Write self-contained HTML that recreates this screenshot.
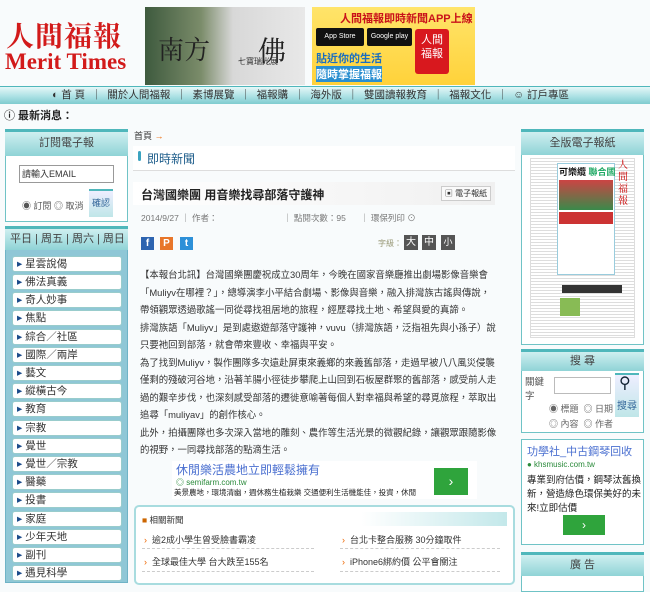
<!DOCTYPE html>
<html><head><meta charset="utf-8"><style>
*{margin:0;padding:0;box-sizing:border-box}
body{width:650px;height:583px;overflow:hidden;background:#f8fbfc;font-family:"Liberation Sans","Noto Sans CJK TC",sans-serif;font-size:11px;color:#333;position:relative}
.a{position:absolute}
.th{background:linear-gradient(#cfeff0,#8fd3d6);border-top:3px solid #4fb7bb;text-align:center;color:#444;font-size:11px}
.box{border:1px solid #6fc3c6;background:#fff}
.li{position:absolute;left:12px;width:110px;height:16px;background:#fff;border:1px solid #9cc;border-radius:3px;font-size:10.5px;line-height:14px;padding-left:4px;color:#333}
.li:before{content:"▸ ";color:#1a4a8a}
.p{font-size:9.4px;line-height:17.5px;color:#333;white-space:nowrap}
</style></head><body>
<!-- header -->
<div class="a" style="left:6px;top:15px;color:#d21a1a;font-family:'Noto Serif CJK SC',serif;font-weight:bold;font-size:28px;letter-spacing:1px">人間福報</div>
<div class="a" style="left:5px;top:49px;color:#d21a1a;font-family:'Liberation Serif',serif;font-weight:bold;font-size:23px">Merit Times</div>
<div class="a" style="left:145px;top:7px;width:160px;height:78px;background:linear-gradient(90deg,#3e5a3e,#7b8c6a 35%,#d8d8d8 55%,#e8e8e8)"></div>
<div class="a" style="left:158px;top:30px;font-size:26px;color:#222;font-family:'Noto Serif CJK SC',serif">南方</div>
<div class="a" style="left:258px;top:30px;font-size:28px;color:#222;font-family:'Noto Serif CJK SC',serif">佛</div>
<div class="a" style="left:238px;top:56px;font-size:8px;color:#333">七寶瑞光展</div>
<div class="a" style="left:312px;top:7px;width:163px;height:78px;background:linear-gradient(#ffe46a,#ffd23a)"></div>
<div class="a" style="left:340px;top:10px;font-size:11px;font-weight:bold;color:#c9121a">人間福報即時新聞APP上線</div>
<div class="a" style="left:316px;top:28px;width:48px;height:18px;background:#111;border-radius:2px;color:#fff;font-size:7px;text-align:center;line-height:18px">App Store</div>
<div class="a" style="left:367px;top:28px;width:45px;height:18px;background:#111;border-radius:2px;color:#fff;font-size:7px;text-align:center;line-height:18px">Google play</div>
<div class="a" style="left:415px;top:29px;width:34px;height:45px;background:#d8181e;border-radius:3px;color:#fff;font-size:11px;text-align:center;line-height:14px;padding-top:4px">人間<br>福報</div>
<div class="a" style="left:316px;top:50px;font-size:11px;font-weight:bold;color:#1a6ec0">貼近你的生活</div>
<div class="a" style="left:316px;top:66px;font-size:11px;font-weight:bold;color:#fff;background:#2a8fd0">隨時掌握福報</div>
<!-- nav -->
<div class="a" style="left:0;top:86px;width:650px;height:18px;background:linear-gradient(#e5f7f8,#a7dfe2 60%,#7fcbcf);border-top:1px solid #4fb7bb;font-size:10.5px;line-height:17px;color:#333;padding-left:52px;white-space:nowrap">◐ 首 頁 &nbsp;｜&nbsp; 關於人間福報 &nbsp;｜&nbsp; 素博展覽 &nbsp;｜&nbsp; 福報購 &nbsp;｜&nbsp; 海外版 &nbsp;｜&nbsp; 雙國讀報教育 &nbsp;｜&nbsp; 福報文化 &nbsp;｜&nbsp; ☺ 訂戶專區</div>
<div class="a" style="left:4px;top:107px;font-size:11px;font-weight:bold;color:#222">ⓘ 最新消息：</div>
<!-- left -->
<div class="a box" style="left:5px;top:129px;width:123px;height:93px"></div>
<div class="a th" style="left:5px;top:129px;width:123px;height:27px;line-height:22px">訂閱電子報</div>
<div class="a" style="left:19px;top:165px;width:95px;height:18px;border:1px solid #999;background:#fff;font-size:9px;line-height:16px;padding-left:2px">請輸入EMAIL</div>
<div class="a" style="left:22px;top:199px;font-size:9px;color:#555;white-space:nowrap">◉ 訂閱 ◎ 取消</div>
<div class="a" style="left:89px;top:189px;width:24px;height:28px;background:linear-gradient(#eef,#bfe6e8);border-top:2px solid #4fb7bb;font-size:9px;color:#369;text-align:center;line-height:24px">確認</div>
<div class="a" style="left:5px;top:226px;width:123px;height:357px;background:#8fc7d6;border:1px solid #6fb3c6"></div>
<div class="a th" style="left:5px;top:226px;width:123px;height:24px;line-height:20px;text-align:left;padding-left:5px;font-size:11px">平日 | 周五 | 周六 | 周日</div>
<div class="li" style="top:256px">星雲說偈</div>
<div class="li" style="top:274px">佛法真義</div>
<div class="li" style="top:292px">奇人妙事</div>
<div class="li" style="top:310px">焦點</div>
<div class="li" style="top:329px">綜合／社區</div>
<div class="li" style="top:347px">國際／兩岸</div>
<div class="li" style="top:365px">藝文</div>
<div class="li" style="top:383px">縱橫古今</div>
<div class="li" style="top:401px">教育</div>
<div class="li" style="top:420px">宗教</div>
<div class="li" style="top:438px">覺世</div>
<div class="li" style="top:456px">覺世／宗教</div>
<div class="li" style="top:474px">醫藥</div>
<div class="li" style="top:492px">投書</div>
<div class="li" style="top:511px">家庭</div>
<div class="li" style="top:529px">少年天地</div>
<div class="li" style="top:547px">副刊</div>
<div class="li" style="top:565px">遇見科學</div>
<!-- middle -->
<div class="a" style="left:134px;top:129px;font-size:9px;color:#333">首頁 <span style="color:#e60">→</span></div>
<div class="a" style="left:133px;top:146px;width:382px;height:25px;background:#fff;border-bottom:1px solid #ddd"></div>
<div class="a" style="left:138px;top:151px;width:3px;height:10px;background:#3aa3c0;border-radius:2px"></div>
<div class="a" style="left:147px;top:150px;font-size:12px;color:#1c5c8a">即時新聞</div>
<div class="a" style="left:133px;top:182px;width:362px;height:23px;background:linear-gradient(90deg,#fff,#f0f0f0)"></div>
<div class="a" style="left:141px;top:186px;font-size:12px;font-weight:bold;color:#222">台灣國樂團 用音樂找尋部落守護神</div>
<div class="a" style="left:441px;top:186px;width:50px;height:15px;border:1px solid #ccc;background:#fafafa;font-size:8px;line-height:13px;text-align:center;color:#333">▣ 電子報紙</div>
<div class="a" style="left:141px;top:212px;font-size:8.5px;color:#777;white-space:nowrap">2014/9/27 ｜ 作者：</div>
<div class="a" style="left:283px;top:212px;font-size:8.5px;color:#777;white-space:nowrap">｜ 點閱次數：95 &nbsp; &nbsp; &nbsp;｜ 環保列印 ⊙</div>
<div class="a" style="left:141px;top:237px;width:13px;height:13px;background:#2d64b0;color:#fff;font-size:10px;font-weight:bold;text-align:center;line-height:13px">f</div>
<div class="a" style="left:160px;top:237px;width:13px;height:13px;background:#e8762a;color:#fff;font-size:10px;font-weight:bold;text-align:center;line-height:13px">P</div>
<div class="a" style="left:180px;top:237px;width:13px;height:13px;background:#2d90d8;color:#fff;font-size:10px;font-weight:bold;text-align:center;line-height:13px">t</div>
<div class="a" style="left:378px;top:238px;font-size:8px;color:#997">字級：</div>
<div class="a" style="left:404px;top:235px;width:14px;height:15px;background:#555;color:#fff;font-size:10px;text-align:center;line-height:15px">大</div>
<div class="a" style="left:422px;top:235px;width:14px;height:15px;background:#555;color:#fff;font-size:10px;text-align:center;line-height:15px">中</div>
<div class="a" style="left:441px;top:235px;width:14px;height:15px;background:#555;color:#fff;font-size:9px;text-align:center;line-height:15px">小</div>
<div class="a p" style="left:140px;top:266px">【本報台北訊】台灣國樂團慶祝成立30周年，今晚在國家音樂廳推出劇場影像音樂會<br>「Muliyv在哪裡？」，總導演李小平結合劇場、影像與音樂，融入排灣族古謠與傳說，<br>帶領觀眾透過歌謠一同從尋找祖居地的旅程，經歷尋找土地、希望與愛的真諦。<br>排灣族語「Muliyv」是到處遨遊部落守護神，vuvu（排灣族語，泛指祖先與小孫子）說<br>只要祂回到部落，就會帶來豐收、幸福與平安。<br>為了找到Muliyv，製作團隊多次遠赴屏東來義鄉的來義舊部落，走過早被八八風災侵襲<br>僅剩的殘破河谷地，沿著羊腸小徑徒步攀爬上山回到石板屋群聚的舊部落，感受前人走<br>過的艱辛步伐，也深刻感受部落的遷徙意喻著每個人對幸福與希望的尋覓旅程，萃取出<br>追尋「muliyav」的創作核心。<br>此外，拍攝團隊也多次深入當地的雕刻、農作等生活光景的微觀紀錄，讓觀眾跟隨影像<br>的視野，一同尋找部落的點滴生活。</div>
<!-- ad -->
<div class="a" style="left:172px;top:461px;width:305px;height:38px;background:#fff"></div>
<div class="a" style="left:176px;top:461px;font-size:12px;color:#4a6fd0">休閒樂活農地立即輕鬆擁有</div>
<div class="a" style="left:176px;top:477px;font-size:8px;color:#2a8a3a">◎ semifarm.com.tw</div>
<div class="a" style="left:174px;top:487px;font-size:7.5px;color:#222;white-space:nowrap">美景農地，環境清幽，週休務生植栽樂 交通便利生活機能佳，投資，休閒</div>
<div class="a" style="left:434px;top:468px;width:34px;height:27px;background:#2fa43c;color:#fff;font-size:14px;text-align:center;line-height:27px">›</div>
<!-- related -->
<div class="a" style="left:134px;top:505px;width:381px;height:80px;border:2px solid #a8dcdf;border-radius:5px;background:#fff"></div>
<div class="a" style="left:142px;top:512px;width:365px;height:14px;background:linear-gradient(90deg,#fff 60%,#c3e8ea)"></div>
<div class="a" style="left:142px;top:514px;font-size:8.5px;color:#333"><span style="color:#c60">■</span> 相關新聞</div>
<div class="a" style="left:144px;top:533px;font-size:9px;color:#333"><span style="color:#e60">›</span> &nbsp;逾2成小學生曾受臉書霸凌</div>
<div class="a" style="left:342px;top:533px;font-size:9px;color:#333"><span style="color:#e60">›</span> &nbsp;台北卡整合服務 30分鐘取件</div>
<div class="a" style="left:142px;top:548px;width:172px;border-top:1px dashed #ccc"></div>
<div class="a" style="left:340px;top:548px;width:160px;border-top:1px dashed #ccc"></div>
<div class="a" style="left:144px;top:555px;font-size:9px;color:#333"><span style="color:#e60">›</span> &nbsp;全球最佳大學 台大跌至155名</div>
<div class="a" style="left:342px;top:555px;font-size:9px;color:#333"><span style="color:#e60">›</span> &nbsp;iPhone6綁約價 公平會關注</div>
<div class="a" style="left:142px;top:571px;width:172px;border-top:1px dashed #ccc"></div>
<div class="a" style="left:340px;top:571px;width:160px;border-top:1px dashed #ccc"></div>
<!-- right -->
<div class="a box" style="left:521px;top:129px;width:123px;height:216px"></div>
<div class="a th" style="left:521px;top:129px;width:123px;height:26px;line-height:22px">全版電子報紙</div>
<div class="a" style="left:530px;top:158px;width:105px;height:180px;background:repeating-linear-gradient(#fff 0 2px,#ddd 2px 3px);border:1px solid #ddd"></div>
<div class="a" style="left:557px;top:163px;width:58px;height:112px;background:#fff;border:1px solid #9cd"></div>
<div class="a" style="left:559px;top:165px;font-size:9px;font-weight:bold;color:#111">可樂纜 <span style="color:#2a6">聯合國</span></div>
<div class="a" style="left:559px;top:180px;width:54px;height:30px;background:linear-gradient(#c44,#3a8a4a)"></div>
<div class="a" style="left:559px;top:212px;width:54px;height:12px;background:#c33"></div>
<div class="a" style="left:618px;top:158px;font-size:10px;color:#c00;line-height:12px;font-family:'Noto Serif CJK SC',serif">人<br>間<br>福<br>報</div>
<div class="a" style="left:562px;top:285px;width:60px;height:8px;background:#333"></div>
<div class="a" style="left:560px;top:298px;width:20px;height:18px;background:#8b5"></div>
<div class="a box" style="left:521px;top:349px;width:123px;height:84px"></div>
<div class="a th" style="left:521px;top:349px;width:123px;height:22px;line-height:18px">搜 尋</div>
<div class="a" style="left:525px;top:376px;font-size:9.5px;color:#555;line-height:14px">關鍵<br>字</div>
<div class="a" style="left:554px;top:377px;width:57px;height:17px;border:1px solid #bbb;background:#fff"></div>
<div class="a" style="left:615px;top:373px;width:24px;height:44px;background:linear-gradient(#eef,#bfe6e8);border-top:2px solid #4fb7bb;font-size:10px;color:#369;text-align:center;padding-top:22px">搜尋</div>
<div class="a" style="left:619px;top:373px;font-size:16px;color:#123">⚲</div>
<div class="a" style="left:549px;top:402px;font-size:9px;color:#666;line-height:15px">◉ 標題 &nbsp;◎ 日期<br>◎ 內容 &nbsp;◎ 作者</div>
<div class="a box" style="left:521px;top:439px;width:123px;height:106px"></div>
<div class="a" style="left:527px;top:443px;font-size:11px;color:#4a6fd0;white-space:nowrap">功學社_中古鋼琴回收</div>
<div class="a" style="left:527px;top:460px;font-size:8px;color:#2a8a3a">● khsmusic.com.tw</div>
<div class="a" style="left:527px;top:474px;font-size:9.5px;color:#222;line-height:14px">專業到府估價，鋼琴汰舊換<br>新，營造綠色環保美好的未<br>來!立即估價</div>
<div class="a" style="left:563px;top:515px;width:42px;height:20px;background:#2fa43c;color:#fff;font-size:12px;text-align:center;line-height:20px">›</div>
<div class="a box" style="left:521px;top:552px;width:123px;height:40px"></div>
<div class="a th" style="left:521px;top:552px;width:123px;height:24px;line-height:20px">廣 告</div>
</body></html>
